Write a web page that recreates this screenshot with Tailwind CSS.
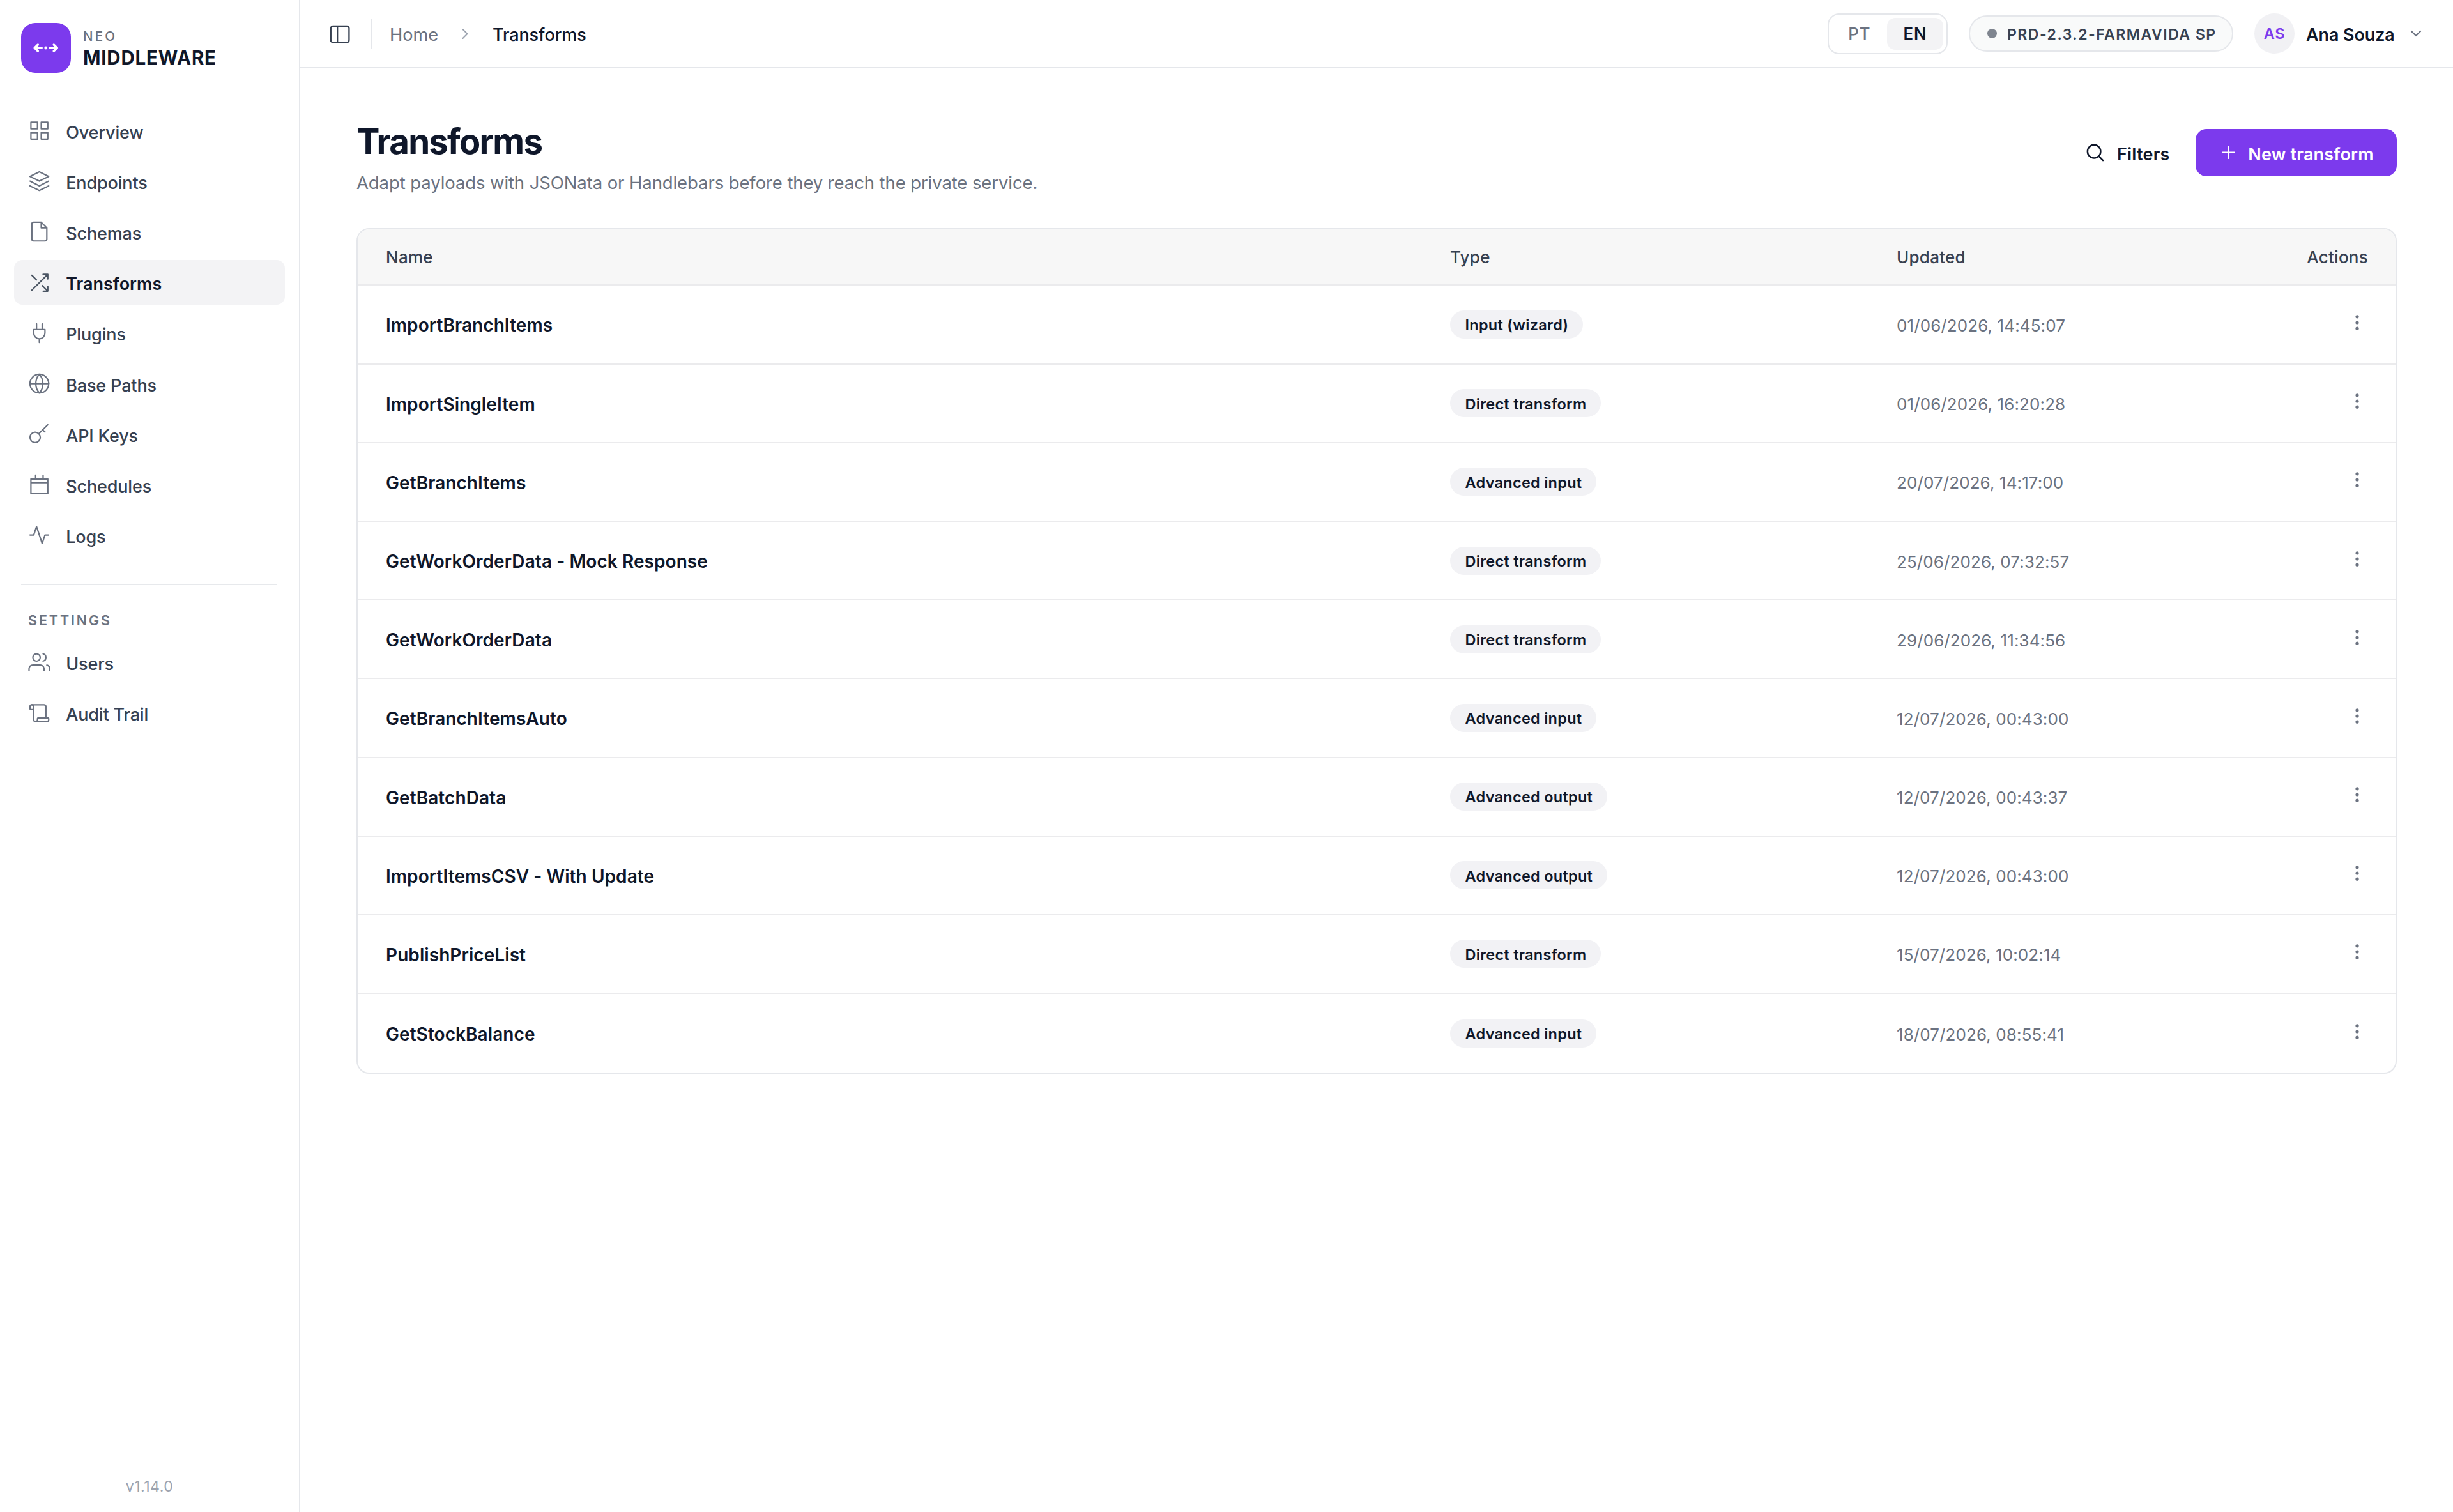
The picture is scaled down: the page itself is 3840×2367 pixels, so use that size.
<!DOCTYPE html>
<html lang="en">
<head>
<meta charset="utf-8">
<title>Transforms · Neo Middleware</title>
<script src="https://cdn.jsdelivr.net/npm/@tailwindcss/browser@4"></script>
</head>
<body class="flex h-[2367px] w-[3840px] overflow-hidden bg-white font-[Inter,sans-serif] text-[#0f172a]">

<!-- Icon sprite -->
<svg class="hidden">
  <symbol id="i-overview" viewBox="0 0 24 24"><path d="M3 3h7v7H3zM14 3h7v7h-7zM14 14h7v7h-7zM3 14h7v7H3z"/></symbol>
  <symbol id="i-endpoints" viewBox="0 0 24 24"><path d="M12 2 2 7l10 5 10-5zM2 17l10 5 10-5M2 12l10 5 10-5"/></symbol>
  <symbol id="i-schemas" viewBox="0 0 24 24"><path d="M14 2H6a2 2 0 0 0-2 2v16a2 2 0 0 0 2 2h12a2 2 0 0 0 2-2V8zM14 2v6h6"/></symbol>
  <symbol id="i-transforms" viewBox="0 0 24 24"><path d="M16 3h5v5M4 20 21 3M21 16v5h-5M15 15l6 6M4 4l5 5"/></symbol>
  <symbol id="i-plugins" viewBox="0 0 24 24"><path d="M9 2v6M15 2v6M6 8h12v4a6 6 0 0 1-12 0zM12 18v4"/></symbol>
  <symbol id="i-paths" viewBox="0 0 24 24"><circle cx="12" cy="12" r="10"/><path d="M2 12h20M12 2c2.5 2.7 3.8 6.3 3.8 10s-1.3 7.3-3.8 10c-2.5-2.7-3.8-6.3-3.8-10S9.5 4.7 12 2z"/></symbol>
  <symbol id="i-keys" viewBox="0 0 24 24"><circle cx="7.5" cy="15.5" r="5.5"/><path d="M21 2l-9.6 9.6M15.5 7.5l2.6 2.3"/></symbol>
  <symbol id="i-schedules" viewBox="0 0 24 24"><path d="M3 6h18v15.8H3zM3 10h18M8 2v4M16 2v4"/></symbol>
  <symbol id="i-logs" viewBox="0 0 24 24"><path d="M22 12h-4l-3 9L9 3l-3 9H2"/></symbol>
  <symbol id="i-users" viewBox="0 0 24 24"><path d="M17 21v-2a4 4 0 0 0-4-4H5a4 4 0 0 0-4 4v2M23 21v-2a4 4 0 0 0-3-3.87M16 3.13a4 4 0 0 1 0 7.75"/><circle cx="9" cy="7" r="3.9"/></symbol>
  <symbol id="i-audit" viewBox="0 0 24 24"><path d="M19 17V5a2 2 0 0 0-2-2H4"/><path d="M8 21h12a2 2 0 0 0 2-2v-1a1 1 0 0 0-1-1H11a1 1 0 0 0-1 1v1a2 2 0 1 1-4 0V5a2 2 0 1 0-4 0v2a1 1 0 0 0 1 1h3"/></symbol>
</svg>

<!-- Sidebar -->
<aside class="flex w-[470px] shrink-0 flex-col border-r-2 border-[#e5e7eb]">
  <div class="flex h-[169.4px] items-start pl-[33px] pt-[36px]">
    <div class="flex size-[78px] items-center justify-center rounded-[22px] bg-[#7c3aed]">
      <svg class="h-[18px] w-[42px]" viewBox="0 0 42 18" fill="none" stroke="#fff" stroke-width="3.5" stroke-linecap="round" stroke-linejoin="round"><path d="M8.3 4 3.2 9l5.1 5M4 9h10.2M33.2 4l5.1 5-5.1 5M38 9H27.2"/><circle cx="20.8" cy="9" r="2.4" fill="#fff" stroke="none"/></svg>
    </div>
    <div class="ml-[19px] flex flex-col leading-none">
      <span class="mt-[10.5px] text-[20.5px] font-medium tracking-[3.2px] text-[#6b7280]">NEO</span>
      <span class="mt-[9px] text-[29.5px] font-bold tracking-[0.8px]">MIDDLEWARE</span>
    </div>
  </div>
  <nav id="nav-main" class="flex flex-col gap-[8.8px] px-[22px]"></nav>
  <div class="ml-[33px] mt-[41px] h-[2px] w-[401px] bg-[#e7e9ec]"></div>
  <div class="ml-[44px] mt-[44.5px] h-[41px] text-[21.5px] leading-none font-semibold tracking-[2.9px] text-[#6b7280]">SETTINGS</div>
  <nav id="nav-settings" class="flex flex-col gap-[8.8px] px-[22px]"></nav>
  <div class="mt-auto mb-[28px] text-center text-[23px] leading-[24px] tracking-[0.5px] text-[#9ca3af]">v1.14.0</div>
</aside>

<div class="flex min-w-0 grow flex-col">
  <!-- Top bar -->
  <header class="flex h-[107px] shrink-0 items-center border-b-2 border-[#e5e7eb] pl-[44px] leading-none">
    <svg class="mr-[30px] size-[36px]" viewBox="0 0 36 36" fill="none" stroke="#374151" stroke-width="2.3"><rect x="3.8" y="5.8" width="28.6" height="25.6" rx="3.5"/><path d="M14.2 5.8v25.6"/></svg>
    <div class="h-[48px] w-[2px] bg-[#e5e7eb]"></div>
    <span class="ml-[28px] w-[78px] pt-[4px] text-[27.2px] text-[#6b7280]">Home</span>
    <svg class="ml-[34px] h-[20px] w-[14px]" viewBox="0 0 14 20" fill="none" stroke="#9ca3af" stroke-width="2" stroke-linecap="round" stroke-linejoin="round"><path d="m2.5 3 7 7-7 7"/></svg>
    <span class="ml-[35px] pt-[4px] text-[27px] font-medium tracking-[-0.1px]">Transforms</span>

    <div class="ml-auto flex h-[64px] w-[188px] items-center rounded-[18px] border-2 border-[#e5e7eb] pl-[5px] text-[25.7px] tracking-[1px]">
      <span class="w-[86px] text-center font-medium text-[#6b7280]">PT</span>
      <span class="flex h-[50px] w-[88px] items-center justify-center rounded-[13px] bg-[#f3f3f5] font-semibold">EN</span>
    </div>
    <div class="ml-[33px] flex h-[57px] w-[414px] items-center rounded-full border-2 border-[#e5e7eb] bg-[#f9fafa] pl-[27px] text-[23px] font-semibold tracking-[1.5px] whitespace-nowrap text-[#374151]">
      <span class="mr-[16px] size-[15px] rounded-full bg-[#7f858f]"></span><span class="pt-[3px]">PRD-2.3.2-FARMAVIDA SP</span>
    </div>
    <div class="ml-[33px] flex size-[63px] items-center justify-center rounded-full bg-[#f1f1f4] pt-[1px] text-[23.5px] font-semibold tracking-[0.8px] text-[#7c3aed]">AS</div>
    <span class="ml-[18px] w-[140px] pt-[4px] text-[26.8px] font-semibold tracking-[0px] whitespace-nowrap">Ana Souza</span>
    <svg class="mr-[48px] ml-[22px] h-[14px] w-[20px]" viewBox="0 0 20 14" fill="none" stroke="#6b7280" stroke-width="2.2" stroke-linecap="round" stroke-linejoin="round"><path d="m3 3 7 7 7-7"/></svg>
  </header>

  <main class="flex flex-col pl-[88px] pr-[88px]">
    <div class="flex h-[250px] items-start">
      <div class="flex grow flex-col">
        <h1 class="mt-[84px] text-[54.6px] leading-[60px] font-bold tracking-[-1.8px]">Transforms</h1>
        <p class="mt-[19px] text-[27.5px] leading-[32px] tracking-[-0.1px] text-[#6b7280]">Adapt payloads with JSONata or Handlebars before they reach the private service.</p>
      </div>
      <div class="mt-[95px] flex h-[74px] items-center leading-none">
        <svg class="size-[35.2px]" viewBox="0 0 24 24" fill="none" stroke="#0f172a" stroke-width="1.7" stroke-linecap="round"><circle cx="11" cy="11" r="7"/><path d="m16 16 4.5 4.5"/></svg>
        <span class="ml-[17px] w-[83px] pt-[4px] text-[27px] font-semibold tracking-[0.2px]">Filters</span>
        <button class="ml-[40px] flex h-[74px] w-[315px] items-center rounded-[17px] bg-[#7c3aed] pl-[34px] text-white">
          <svg class="size-[35.2px]" viewBox="0 0 24 24" fill="none" stroke="currentColor" stroke-width="1.5" stroke-linecap="round"><path d="M12 5.6v12.8M5.6 12h12.8"/></svg>
          <span class="ml-[13px] pt-[4px] text-[27px] font-semibold tracking-[0.2px] whitespace-nowrap">New transform</span>
        </button>
      </div>
    </div>

    <!-- Transforms table -->
    <section class="flex h-[1324.4px] w-[3194px] flex-col overflow-hidden rounded-[20px] border-2 border-[#e5e7eb]">
      <div class="flex h-[88.4px] shrink-0 items-center border-b-2 border-[#ebebed] bg-[#f7f7f7] pr-[43px] pl-[44px] pt-[1px] text-[26px] font-medium tracking-[0.25px] text-[#374151]">
        <span class="w-[1666px]">Name</span><span class="w-[699px]">Type</span><span class="grow">Updated</span><span>Actions</span>
      </div>
      <div id="rows" class="flex flex-col"></div>
    </section>
  </main>
</div>

<script>
const item = ([id, label, active]) => `
  <a class="flex h-[70.4px] items-center rounded-[13px] pl-[22px] ${active ? 'bg-[#f3f3f5]' : ''}">
    <svg class="size-[35.2px] shrink-0 ${active ? 'text-[#4b5563]' : 'text-[#6b7280]'}" fill="none" stroke="currentColor" stroke-width="1.5" stroke-linecap="round" stroke-linejoin="round"><use href="#i-${id}"/></svg>
    <span class="ml-[24px] pt-[5px] text-[27px] leading-none ${active ? 'font-semibold' : 'font-medium tracking-[-0.15px] text-[#374151]'}">${label}</span>
  </a>`;
document.getElementById('nav-main').innerHTML = [
  ['overview', 'Overview'], ['endpoints', 'Endpoints'], ['schemas', 'Schemas'], ['transforms', 'Transforms', true],
  ['plugins', 'Plugins'], ['paths', 'Base Paths'], ['keys', 'API Keys'], ['schedules', 'Schedules'], ['logs', 'Logs'],
].map(item).join('');
document.getElementById('nav-settings').innerHTML = [['users', 'Users'], ['audit', 'Audit Trail']].map(item).join('');

document.getElementById('rows').innerHTML = [
  ['ImportBranchItems', 'Input (wizard)', '01/06/2026, 14:45:07'],
  ['ImportSingleItem', 'Direct transform', '01/06/2026, 16:20:28'],
  ['GetBranchItems', 'Advanced input', '20/07/2026, 14:17:00'],
  ['GetWorkOrderData - Mock Response', 'Direct transform', '25/06/2026, 07:32:57'],
  ['GetWorkOrderData', 'Direct transform', '29/06/2026, 11:34:56'],
  ['GetBranchItemsAuto', 'Advanced input', '12/07/2026, 00:43:00'],
  ['GetBatchData', 'Advanced output', '12/07/2026, 00:43:37'],
  ['ImportItemsCSV - With Update', 'Advanced output', '12/07/2026, 00:43:00'],
  ['PublishPriceList', 'Direct transform', '15/07/2026, 10:02:14'],
  ['GetStockBalance', 'Advanced input', '18/07/2026, 08:55:41'],
].map(([name, type, date]) => `
  <div class="flex h-[123.2px] shrink-0 items-center border-b-2 border-[#ebebed] pl-[44px] pr-[52px] last:border-b-0">
    <span class="w-[1666px] pt-[3px] text-[28px] font-semibold tracking-[0.07px]">${name}</span>
    <span class="flex w-[699px]"><span class="flex h-[44px] items-center rounded-full bg-[#f2f2f5] pt-[2px] pr-[22.5px] pl-[23.5px] text-[23.5px] font-semibold tracking-[0.27px]">${type}</span></span>
    <span class="grow pt-[3px] text-[26px] tracking-[0.1px] text-[#6b7280]">${date}</span>
    <svg class="mb-[6px] h-[28px] w-[16px]" viewBox="0 0 16 28" fill="#6b7280"><circle cx="8" cy="4.8" r="2.6"/><circle cx="8" cy="14" r="2.6"/><circle cx="8" cy="23.2" r="2.6"/></svg>
  </div>`).join('');
</script>
</body>
</html>
